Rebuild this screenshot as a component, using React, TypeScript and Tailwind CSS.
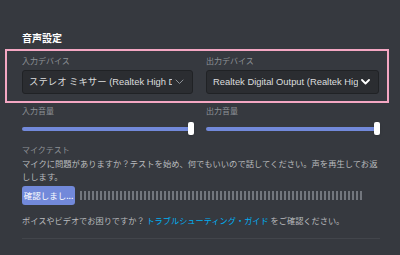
import React from 'react';

const font = { fontFamily: '"Noto Sans CJK JP", "Noto Sans", sans-serif' };
const selectFont = { fontFamily: '"Liberation Sans", "Noto Sans CJK JP", sans-serif' };

const Chevron = ({ bold }: { bold?: boolean }) => (
  <svg width="9" height="6" viewBox="0 0 9 6" className="shrink-0">
    <path
      d="M1 1l3.5 3.5L8 1"
      fill="none"
      stroke={bold ? '#ffffff' : '#8e9297'}
      strokeWidth={bold ? 1.8 : 1}
      strokeLinecap="round"
      strokeLinejoin="round"
    />
  </svg>
);

const DeviceSelect = ({ label, value, bold }: { label: string; value: string; bold?: boolean }) => (
  <div className="flex flex-col">
    <div className="text-[8px] leading-[10px] text-[#8e9297] mb-[4px]">{label}</div>
    <div className="h-[24px] flex items-center gap-[3px] pl-[6px] pr-[8px] rounded-[3px] bg-[#2b2d31] border border-[#202225]">
      <span className="flex-1 overflow-hidden whitespace-nowrap text-[9.4px] text-[#dcddde]" style={selectFont}>
        {value}
      </span>
      <Chevron bold={bold} />
    </div>
  </div>
);

const Slider = ({ label }: { label: string }) => (
  <div className="flex flex-col">
    <div className="text-[8px] leading-[10px] text-[#8e9297]">{label}</div>
    <div className="relative h-[13px] mt-[6px] flex items-center">
      <div className="h-[4px] w-full rounded-full bg-[#7289da]" />
      <div className="absolute right-[-1px] top-0 w-[6px] h-[13px] rounded-[2px] bg-white shadow" />
    </div>
  </div>
);

export default function App() {
  const bars = Array.from({ length: 71 });
  return (
    <div className="w-[400px] h-[255px] overflow-hidden bg-[#36393f] text-[#dcddde]" style={font}>
      <div className="pt-[32px] pl-[22px] text-[10px] leading-[12px] font-bold text-white">音声設定</div>
      <div className="ml-[5px] mt-[5px] w-[384px] h-[54px] border-2 border-[#f4a7c3] pt-[5px] pl-[15px] pr-[8px] grid grid-cols-[171px_173px] gap-x-[13px]">
        <DeviceSelect label="入力デバイス" value="ステレオ ミキサー (Realtek High Del" />
        <DeviceSelect label="出力デバイス" value="Realtek Digital Output (Realtek High D" bold />
      </div>
      <div className="pl-[22px] pr-[22px] mt-[3px] grid grid-cols-[171px_173px] gap-x-[13px]">
        <Slider label="入力音量" />
        <Slider label="出力音量" />
      </div>
      <div className="pl-[22px] pr-[20px]">
        <div className="mt-[10px] text-[8px] leading-[10px] text-[#8e9297]">マイクテスト</div>
        <p className="mt-[2px] w-[359px] text-[8.3px] leading-[13px] text-[#b9bbbe]">
          マイクに問題がありますか？テストを始め、何でもいいので話してください。声を再生してお返しします。
        </p>
        <div className="mt-[3px] flex items-center gap-[5px]">
          <div className="w-[53px] h-[19px] rounded-[3px] bg-[#7289da] text-white text-[8.5px] flex items-center justify-center">
            確認しまし...
          </div>
          <div className="flex gap-[2px]">
            {bars.map((_, i) => (
              <div key={i} className="w-[2px] h-[9px] bg-[#72767d]" />
            ))}
          </div>
        </div>
        <p className="mt-[9px] text-[8.2px] leading-[12px] text-[#b9bbbe]">
          ボイスやビデオでお困りですか？ <span className="text-[#00b0f4]">トラブルシューティング・ガイド</span> をご確認ください。
        </p>
        <div className="mt-[12px] w-[358px] h-px bg-[#42454b]" />
      </div>
    </div>
  );
}
